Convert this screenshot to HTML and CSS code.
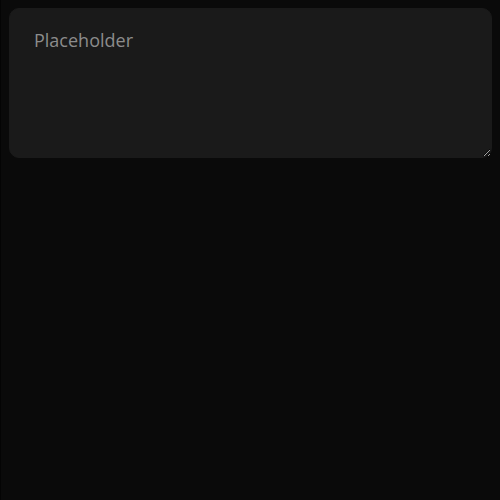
FILE: index.html
```html
<!DOCTYPE html>
<html>
<head>
<meta charset="utf-8">
<link rel="stylesheet" href="styles.css">
</head>
<body>
<div class="page">
  <textarea class="field" placeholder="Placeholder"></textarea>
</div>
</body>
</html>
```

FILE: styles.css
```css
html, body {
  margin: 0;
  height: 100%;
  background: #0a0a0a;
}
body {
  border-left: 1px solid #040404;
  box-sizing: border-box;
}
.page {
  padding: 8px 8px 8px 8px;
}
.field {
  display: block;
  box-sizing: border-box;
  width: 100%;
  height: 150px;
  margin: 0;
  padding: 19px 24px;
  border: 1px solid #1a1a1a;
  border-radius: 10px;
  background: #1a1a1a;
  color: #e0e0e0;
  font-family: "Open Sans", sans-serif;
  font-size: 18px;
  line-height: 24px;
  outline: none;
  resize: both;
}
.field::placeholder {
  color: #8c8c8c;
}
```
